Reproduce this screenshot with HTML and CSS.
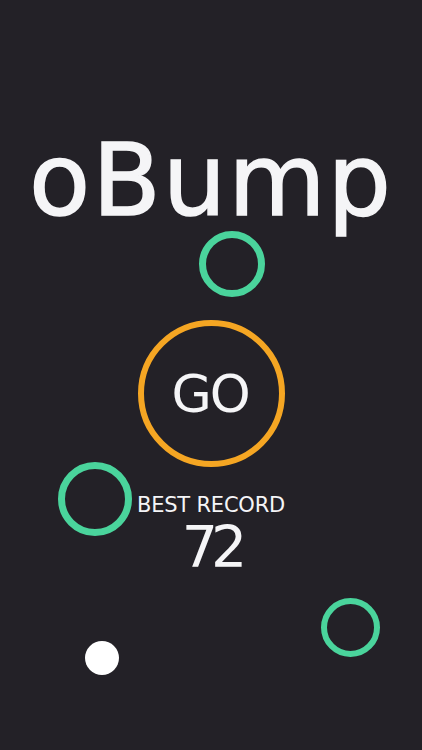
FILE: index.html
```html
<!DOCTYPE html>
<html lang="en">
<head>
<meta charset="utf-8">
<title>oBump</title>
<link rel="stylesheet" href="styles.css">
</head>
<body>
<main class="screen">
  <h1 class="title">oBump</h1>
  <button class="go">GO</button>
  <div class="best-label">BEST RECORD</div>
  <div class="best-value">72</div>

  <span class="ring ring-a"></span>
  <span class="ring ring-b"></span>
  <span class="ring ring-c"></span>
  <span class="ball"></span>
</main>
</body>
</html>
```

FILE: styles.css
```css
html, body {
  margin: 0;
  padding: 0;
  background: #232127;
}

.screen {
  position: relative;
  width: 422px;
  height: 750px;
  overflow: hidden;
  display: flex;
  flex-direction: column;
  align-items: center;
  font-family: "DejaVu Sans", "Liberation Sans", sans-serif;
  color: #f5f5f7;
}

.title {
  margin: 131px 0 0 0;
  font-size: 100px;
  font-weight: normal;
  line-height: 1;
  letter-spacing: 2px;
  -webkit-text-stroke: 1.5px #f5f5f7;
}

.go {
  margin-top: 89px;
  width: 147px;
  height: 147px;
  box-sizing: border-box;
  border: 6px solid #f5a623;
  border-radius: 50%;
  background: transparent;
  color: #f5f5f7;
  font-family: "DejaVu Sans", "Liberation Sans", sans-serif;
  font-size: 52px;
  line-height: 1;
  letter-spacing: -2px;
  display: flex;
  align-items: center;
  justify-content: center;
  padding: 0 2px 0 0;
}

.best-label {
  margin-top: 28px;
  font-size: 21px;
  line-height: 1;
  letter-spacing: -0.2px;
}

.best-value {
  margin-top: 3px;
  font-size: 57px;
  line-height: 1;
  letter-spacing: -7px;
}

.ring {
  position: absolute;
  box-sizing: border-box;
  border-radius: 50%;
  border: 7px solid #4ad49c;
}

.ring-a {
  left: 199px;
  top: 231px;
  width: 66px;
  height: 66px;
}

.ring-b {
  left: 58px;
  top: 462px;
  width: 74px;
  height: 74px;
}

.ring-c {
  left: 321px;
  top: 598px;
  width: 59px;
  height: 59px;
  border-width: 6px;
}

.ball {
  position: absolute;
  left: 85px;
  top: 641px;
  width: 34px;
  height: 34px;
  border-radius: 50%;
  background: #ffffff;
}
```
